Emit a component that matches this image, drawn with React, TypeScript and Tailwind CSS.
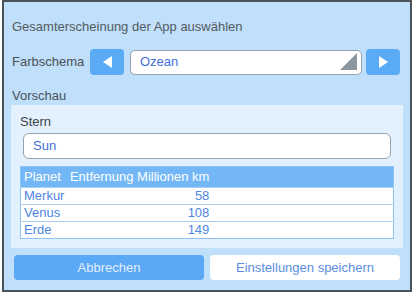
import { useState } from "react";

const planets = [
  { name: "Merkur", dist: 58 },
  { name: "Venus", dist: 108 },
  { name: "Erde", dist: 149 },
];

export default function App() {
  const [scheme] = useState("Ozean");

  return (
    <div className="w-[413px] h-[294px] bg-white font-['Liberation_Sans',Arial,sans-serif] text-[13px]">
      <div className="ml-[2px] w-[410px] h-[292px] border-2 border-[#4b525a] bg-[#bfdffb] flex flex-col px-[8px]">
        <div className="pt-[17px] text-[#555b61] leading-[16px]">Gesamterscheinung der App auswählen</div>

        <div className="mt-[14px] flex items-center h-[26px]">
          <span className="w-[78px] text-[#4b5157]">Farbschema</span>
          <button className="w-[34px] h-[26px] rounded-[4px] bg-[#5aaaf6] flex items-center justify-center">
            <span className="block w-0 h-0 border-y-[6px] border-y-transparent border-r-[9px] border-r-white" />
          </button>
          <div className="relative ml-[6px] w-[232px] h-[25px] rounded-[5px] border border-[#9aa1a8] bg-white flex items-center pl-[9px] text-[#3f6fd8]">
            {scheme}
            <span className="absolute right-[4px] bottom-[4px] block w-0 h-0 border-l-[17px] border-l-transparent border-b-[17px] border-b-[#8c969e]" />
          </div>
          <button className="ml-[4px] w-[34px] h-[26px] rounded-[4px] bg-[#5aaaf6] flex items-center justify-center">
            <span className="block w-0 h-0 border-y-[6px] border-y-transparent border-l-[9px] border-l-white" />
          </button>
        </div>

        <div className="mt-[13px] text-[#4b5157] leading-[16px]">Vorschau</div>

        <div className="mt-[1px] -ml-[1px] w-[392px] bg-[#e3f0fd] px-[9px] pt-[9px] pb-[9px]">
          <div className="text-[#3d4349] leading-[16px]">Stern</div>
          <div className="mt-[3px] ml-[3px] w-[368px] h-[26px] rounded-[6px] border border-[#9aa1a8] bg-white flex items-center pl-[9px] text-[#3f6fd8]">
            Sun
          </div>
          <table className="mt-[7px] w-[374px] border-collapse border border-[#8fc3f1] bg-white">
            <thead>
              <tr className="bg-[#74b7f6] h-[21px] text-white">
                <th className="font-normal text-left pl-[3px] pr-[9px] w-[1px] whitespace-nowrap">Planet</th>
                <th className="font-normal text-left w-[1px] whitespace-nowrap">Entfernung Millionen km</th>
                <th />
              </tr>
            </thead>
            <tbody className="text-[#4f86e0]">
              {planets.map((p) => (
                <tr key={p.name} className="h-[17px] border-t border-[#a9d0f3] leading-[16px]">
                  <td className="pl-[3px]">{p.name}</td>
                  <td className="text-right">{p.dist}</td>
                  <td />
                </tr>
              ))}
            </tbody>
          </table>
        </div>

        <div className="mt-[7px] ml-[2px] flex gap-[6px]">
          <button className="w-[190px] h-[25px] rounded-[4px] bg-[#5aa8f6] text-[#e2eefb]">Abbrechen</button>
          <button className="w-[190px] h-[25px] rounded-[4px] bg-white text-[#5a8de0]">Einstellungen speichern</button>
        </div>
      </div>
    </div>
  );
}
